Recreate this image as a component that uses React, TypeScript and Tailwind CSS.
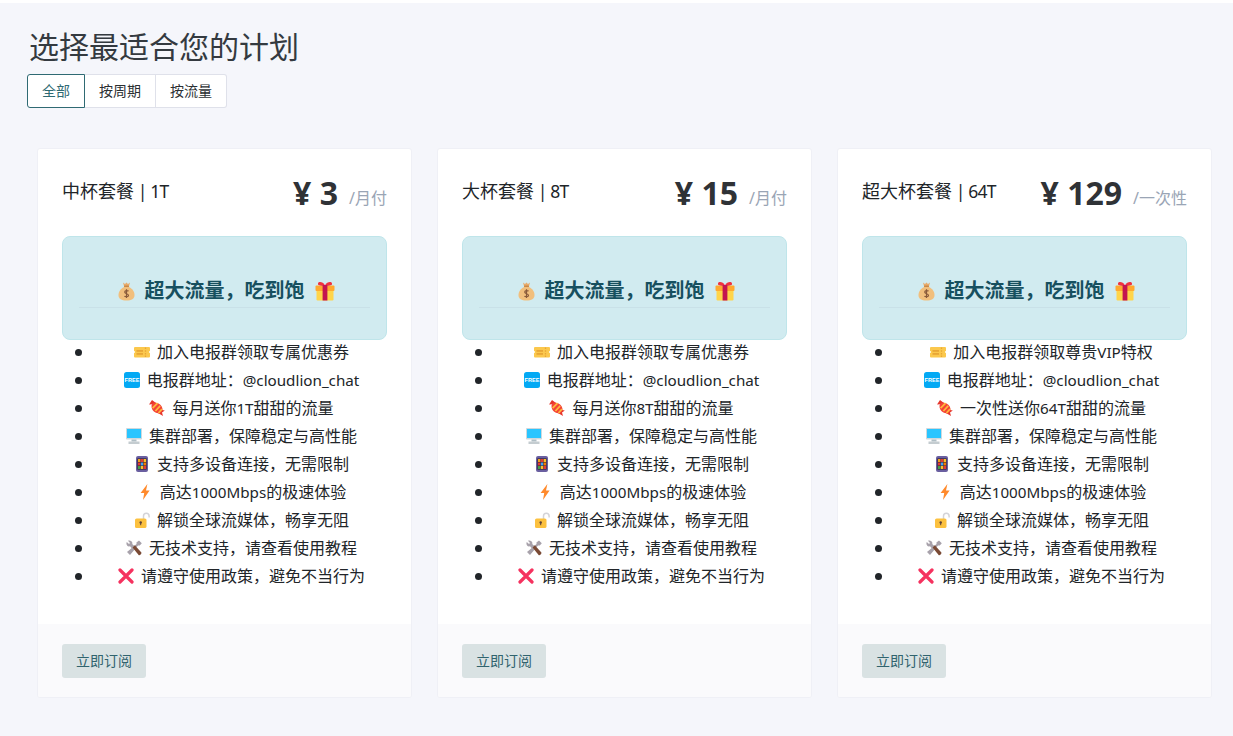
import React from "react";

const Bag = () => (
  <svg width="20" height="20" viewBox="0 0 20 20" className="shrink-0">
    <g transform="translate(1.5 0)">
      <path d="M6.5 1.5 L8.5 3 L10 1.5 L11.5 3 L13.5 1.5 L12.5 5 H7.5 Z" fill="#e8ab6b" />
      <rect x="7.5" y="4.5" width="5" height="1.6" rx=".6" fill="#c98a4b" />
      <path d="M7.6 6 C3.5 8 2 11 2 14 C2 18 5 19.5 10 19.5 C15 19.5 18 18 18 14 C18 11 16.5 8 12.4 6 Z" fill="#f1bf7d" />
      <path d="M12 10.2 C11.5 9.4 8.4 9.3 8.2 11 C8 13 12 12.4 12 14.4 C12 16 8.6 16 8 15 M10 8.2 V17" fill="none" stroke="#8a5a3a" strokeWidth="1.2" />
    </g>
  </svg>
);
const Gift = () => (
  <svg width="20" height="20" viewBox="0 0 20 20" className="shrink-0">
    <rect x="1.5" y="7.5" width="17" height="12" rx="1.2" fill="#ffd54a" />
    <rect x="0.5" y="4.5" width="19" height="5.5" rx="1" fill="#ffa92e" />
    <path d="M10 4.5 C8 .5 3.5 .3 3 2.5 C2.6 4.4 5 4.8 10 4.8 C15 4.8 17.4 4.4 17 2.5 C16.5 .3 12 .5 10 4.5 Z" fill="#f0323f" />
    <rect x="7.6" y="4" width="4.8" height="15.5" fill="#c4144f" />
  </svg>
);
const Ticket = () => (
  <svg width="16" height="16" viewBox="0 0 16 16" className="shrink-0">
    <path d="M1 3 H15 a1 1 0 0 1 1 1 V7 a1 1 0 0 0 0 2 V12.5 a1 1 0 0 1 -1 1 H1 a1 1 0 0 1 -1 -1 V9 a1 1 0 0 0 0 -2 V4 a1 1 0 0 1 1 -1 Z" fill="#fbc84d" />
    <rect x="2.5" y="6" width="6.5" height="1.8" fill="#e8a635" />
    <rect x="2.5" y="9" width="6.5" height="1.8" fill="#e8a635" />
    <path d="M11.5 3.5 V13" stroke="#e8a635" strokeWidth="1.3" strokeDasharray="1.5 1.2" />
  </svg>
);
const Free = () => (
  <svg width="16" height="16" viewBox="0 0 16 16" className="shrink-0">
    <rect width="16" height="16" rx="2.5" fill="#03a9f4" />
    <text x="8" y="10.2" textAnchor="middle" fontSize="5.6" fontWeight="700" fill="#fff" fontFamily="'Liberation Sans', sans-serif">FREE</text>
  </svg>
);
const Candy = () => (
  <svg width="16" height="16" viewBox="0 0 16 16" className="shrink-0">
    <path d="M3 0 L0 4.6 L3.6 4.2 L4.2 7.4 L7.6 3.4 Z" fill="#e5352b" />
    <path d="M10.5 9.5 L15.8 10.6 L13 12.4 L14 16 L9 13 Z" fill="#e5352b" />
    <ellipse cx="8" cy="8" rx="6.2" ry="4.6" transform="rotate(42 8 8)" fill="#f44336" />
    <path d="M3.6 8.2 L8.6 3.2 M6.4 11 L11.2 5.8 M9.4 13 L13 9.2" stroke="#ffb83d" strokeWidth="1.7" />
  </svg>
);
const Monitor = () => (
  <svg width="16" height="16" viewBox="0 0 16 16" className="shrink-0">
    <rect x="0" y="0" width="16" height="11.5" rx=".8" fill="#cfd8dc" />
    <rect x="1" y="1" width="14" height="9" fill="#29c5ff" />
    <rect x="5.5" y="11.5" width="5" height="2" fill="#b0bec5" />
    <rect x="2.5" y="13.5" width="11" height="2.5" fill="#c4ccd0" />
  </svg>
);
const Tablet = () => (
  <svg width="16" height="16" viewBox="0 0 16 16" className="shrink-0">
    <rect x="2" y="0" width="12" height="16" rx="2" fill="#6a5fa0" />
    <rect x="3.4" y="2.4" width="9.2" height="11.2" fill="#2c2138" />
    <rect x="4" y="3" width="2.5" height="3" fill="#f0a020" />
    <rect x="6.8" y="3" width="2.5" height="3" fill="#e53935" />
    <rect x="9.6" y="3" width="2.5" height="3" fill="#fbc02d" />
    <rect x="4" y="6.5" width="2.5" height="3" fill="#e53935" />
    <rect x="6.8" y="6.5" width="2.5" height="3" fill="#42a5f5" />
    <rect x="9.6" y="6.5" width="2.5" height="3" fill="#f57c00" />
    <rect x="4" y="10" width="2.5" height="3" fill="#43a047" />
    <rect x="6.8" y="10" width="2.5" height="3" fill="#fbc02d" />
    <rect x="9.6" y="10" width="2.5" height="3" fill="#e53935" />
  </svg>
);
const Bolt = () => (
  <svg width="16" height="16" viewBox="0 0 16 16" className="shrink-0">
    <path d="M10.4 0 L3.6 9 H7.2 L6 16 L12.6 6.6 H9 Z" fill="#ff8a2b" />
  </svg>
);
const Lock = () => (
  <svg width="16" height="16" viewBox="0 0 16 16" className="shrink-0">
    <path d="M9.5 7 V4 a2.8 2.8 0 0 1 5.6 0 V5.6" fill="none" stroke="#d4d4d8" strokeWidth="1.5" />
    <rect x="1" y="6.4" width="11.5" height="9.6" rx="1.6" fill="#fcc13f" />
    <circle cx="6.7" cy="10.4" r="1.2" fill="#5d4037" />
    <rect x="6.2" y="10.6" width="1" height="2.6" fill="#5d4037" />
  </svg>
);
const Tools = () => (
  <svg width="16" height="16" viewBox="0 0 16 16" className="shrink-0">
    <path d="M13 .5 L15.8 3.3 L13.8 5.6 L12 5.4 L4 15 L1 12 L10.6 4 L10.4 2.4 Z" fill="#a8a2ab" />
    <path d="M2 .8 C3.8 -.2 6.2 1 6.4 3 L6.2 4 L8.4 6 L6 8.4 L4 6.2 L3 6.4 C.8 6.2 -.2 3.6 .8 2 L3 4 L4 3 Z" fill="#a8a2ab" />
    <path d="M6.6 7.4 L8.8 5.2 L15.4 12.4 C16 13.4 13.8 15.8 12.8 15.2 Z" fill="#7a4a35" />
  </svg>
);
const Cross = () => (
  <svg width="16" height="16" viewBox="0 0 16 16" className="shrink-0">
    <path d="M2 2 L14 14 M14 2 L2 14" stroke="#f5325f" strokeWidth="3.2" strokeLinecap="round" />
  </svg>
);

function Mix({ text, latin }: { text: string; latin: string }) {
  return (
    <>
      {text.split(/([A-Za-z0-9@_| ]+)/).map((part, i) =>
        i % 2 === 1 ? (
          <span key={i} className={latin}>
            {part}
          </span>
        ) : (
          part
        ),
      )}
    </>
  );
}

const plans = [
  { name: "中杯套餐 | 1T", price: "3", unit: "/月付", first: "加入电报群领取专属优惠券", gift: "每月送你1T甜甜的流量" },
  { name: "大杯套餐 | 8T", price: "15", unit: "/月付", first: "加入电报群领取专属优惠券", gift: "每月送你8T甜甜的流量" },
  { name: "超大杯套餐 | 64T", price: "129", unit: "/一次性", first: "加入电报群领取尊贵VIP特权", gift: "一次性送你64T甜甜的流量" },
];

function Feature({ icon, text }: { icon: React.ReactNode; text: string }) {
  return (
    <li className="h-7">
      <div className="flex h-7 items-center justify-center gap-[7px] leading-7">
        {icon}
        <span>
          <Mix text={text} latin="text-[15.2px]" />
        </span>
      </div>
    </li>
  );
}

export default function App() {
  return (
    <div
      className="h-[736px] overflow-hidden bg-[#f5f6fb] text-[#212529]"
      style={{ fontFamily: '"Noto Sans", "Noto Sans CJK SC", sans-serif' }}
    >
      <div className="h-[3px] bg-white" />
      <div className="pl-[27px]">
        <h1 className="pt-[23px] pl-[2px] text-[30px] leading-[42px] font-normal text-[#343a40]">选择最适合您的计划</h1>
        <div className="mt-[6px] flex h-[34px] w-fit text-[14px] text-[#2b2f33]">
          <button className="h-[34px] w-[58px] rounded-l-[3px] border border-[#2f6a73] bg-white pb-[2px] text-[#2f6a73]">全部</button>
          <button className="h-[34px] w-[71px] border-y border-r border-[#dfe1ea] bg-white pb-[2px]">按周期</button>
          <button className="h-[34px] w-[71px] rounded-r-[3px] border-y border-r border-[#dfe1ea] bg-white pb-[2px]">按流量</button>
        </div>
      </div>
      <div className="mt-10 grid grid-cols-3 gap-[25px] pr-[21px] pl-[37px]">
        {plans.map((p) => (
          <div key={p.name} className="flex h-[550px] flex-col overflow-hidden rounded-[3px] border border-[#eff0f6] bg-white">
            <div className="h-[475px] px-6 pt-[24px]">
              <div className="flex h-[63px] items-start justify-between">
                <div className="pt-[5px] text-[18px] leading-[27px] text-[#212529]">
                  <Mix text={p.name} latin="text-[17.5px] tracking-[-0.8px]" />
                </div>
                <div className="flex items-baseline text-[#2f3236]">
                  <span className="text-[32px] leading-[40px] font-bold">¥ {p.price}</span>
                  <span className="ml-[11px] -translate-y-px text-[16px] text-[#9aa5b5]">{p.unit}</span>
                </div>
              </div>
              <div className="flex h-[104px] flex-col items-center rounded-[8px] border border-[#bfe5ea] bg-[#d1ebf0] px-4 pt-[37px]">
                <div className="flex h-[32px] items-center gap-[10px] pt-[1px] text-[20px] leading-[32px] font-bold text-[#17505f]">
                  <Bag />
                  <span>超大流量，吃到饱</span>
                  <Gift />
                </div>
                <div className="mt-[1px] h-px w-full bg-[#c9e1e8]" />
              </div>
              <ul className="-mt-[2px] list-disc pl-[34px] text-[16px] text-[#212529] marker:text-[20px]">
                <Feature icon={<Ticket />} text={p.first} />
                <Feature icon={<Free />} text="电报群地址：@cloudlion_chat" />
                <Feature icon={<Candy />} text={p.gift} />
                <Feature icon={<Monitor />} text="集群部署，保障稳定与高性能" />
                <Feature icon={<Tablet />} text="支持多设备连接，无需限制" />
                <Feature icon={<Bolt />} text="高达1000Mbps的极速体验" />
                <Feature icon={<Lock />} text="解锁全球流媒体，畅享无阻" />
                <Feature icon={<Tools />} text="无技术支持，请查看使用教程" />
                <Feature icon={<Cross />} text="请遵守使用政策，避免不当行为" />
              </ul>
            </div>
            <div className="flex-1 bg-[#fafafc] px-6 pt-[20px]">
              <button className="h-[34px] w-[84px] rounded-[3px] bg-[#d9e2e3] pb-[2px] text-[14px] text-[#30636e]">立即订阅</button>
            </div>
          </div>
        ))}
      </div>
    </div>
  );
}
